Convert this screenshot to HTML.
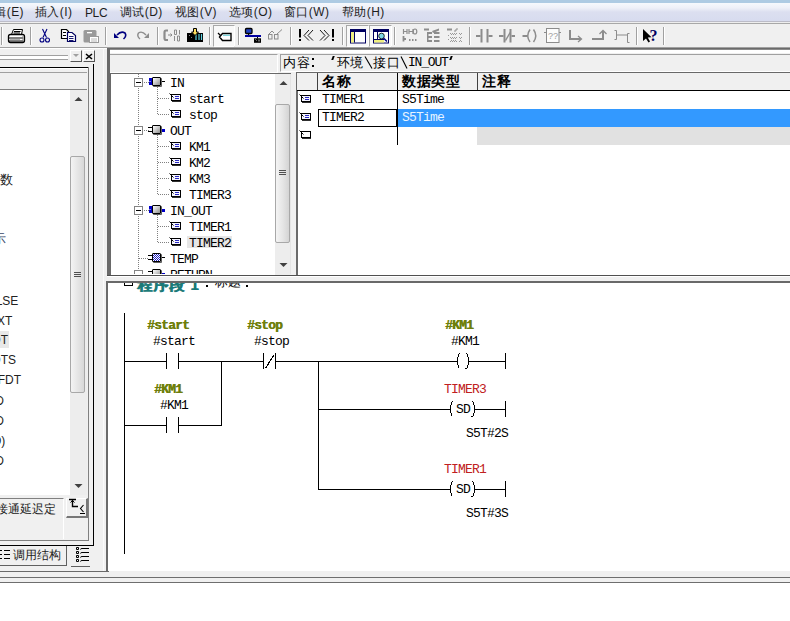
<!DOCTYPE html>
<html><head><meta charset="utf-8">
<style>
*{margin:0;padding:0;box-sizing:border-box}
html,body{width:790px;height:621px;overflow:hidden;background:#fff;position:relative;font-family:"Liberation Sans",sans-serif}
.a{position:absolute}
.mono{font-family:"Liberation Mono",monospace;font-size:13px;letter-spacing:-0.8px;white-space:pre;line-height:16px}
.menu{font-size:12px;color:#1e1e1e;top:5px;line-height:14px;white-space:pre;letter-spacing:0.4px}
.lad{font-family:"Liberation Mono",monospace;font-size:13px;letter-spacing:-0.8px;white-space:pre;line-height:14px}
.hl{position:absolute;height:1px}
.vl{position:absolute;width:1px}
</style></head><body>

<!-- menubar -->
<div class="a" style="left:0;top:0;width:790px;height:24px;background:linear-gradient(#aecbe3 0,#aecbe3 3px,#f6f9fd 3px,#eef0f8 8px,#dcdff0 12px,#d8dcef 20px)"></div>
<div class="hl" style="left:0;top:21px;width:790px;background:#bcbcc8"></div>
<div class="hl" style="left:0;top:22px;width:790px;background:#eeeeee"></div>
<div class="hl" style="left:0;top:23px;width:790px;background:#a8a8a8"></div>
<div class="a menu" style="left:-18px">编辑(E)</div>
<div class="a menu" style="left:35px">插入(I)</div>
<div class="a menu" style="left:85px;top:6px;letter-spacing:-0.4px">PLC</div>
<div class="a menu" style="left:120px">调试(D)</div>
<div class="a menu" style="left:175px">视图(V)</div>
<div class="a menu" style="left:229px">选项(O)</div>
<div class="a menu" style="left:284px">窗口(W)</div>
<div class="a menu" style="left:342px">帮助(H)</div>

<!-- toolbar -->
<div class="a" style="left:0;top:24px;width:790px;height:23px;background:#f0f0f0"></div>
<div class="hl" style="left:0;top:47px;width:790px;background:#a0a0a0"></div>

<svg class="a" style="left:0;top:0" width="790" height="48" shape-rendering="auto">
<!-- separators -->
<g fill="#a0a0a0">
<rect x="1" y="27" width="1" height="18"/><rect x="30" y="27" width="1" height="18"/>
<rect x="105" y="27" width="1" height="18"/><rect x="157" y="27" width="1" height="18"/>
<rect x="209" y="27" width="1" height="18"/><rect x="238" y="27" width="1" height="18"/>
<rect x="290" y="27" width="1" height="18"/><rect x="342" y="27" width="1" height="18"/>
<rect x="394" y="27" width="1" height="18"/><rect x="469" y="27" width="1" height="18"/>
<rect x="636" y="27" width="1" height="18"/><rect x="663" y="27" width="1" height="18"/>
</g>
<g fill="#ffffff">
<rect x="2" y="27" width="1" height="18"/><rect x="31" y="27" width="1" height="18"/>
<rect x="106" y="27" width="1" height="18"/><rect x="158" y="27" width="1" height="18"/>
<rect x="210" y="27" width="1" height="18"/><rect x="239" y="27" width="1" height="18"/>
<rect x="291" y="27" width="1" height="18"/><rect x="343" y="27" width="1" height="18"/>
<rect x="395" y="27" width="1" height="18"/><rect x="470" y="27" width="1" height="18"/>
<rect x="637" y="27" width="1" height="18"/><rect x="664" y="27" width="1" height="18"/>
</g>
<!-- pressed buttons -->
<g>
<rect x="213.5" y="25.5" width="21" height="21" fill="#f8f8f8" stroke="#a8a8a8"/>
<path d="M234.5 25.5V46.5H213.5" stroke="#ffffff" fill="none"/>
<rect x="346.5" y="25.5" width="22" height="21" fill="#f8f8f8" stroke="#a8a8a8"/>
<path d="M368.5 25.5V46.5H346.5" stroke="#ffffff" fill="none"/>
<rect x="369.5" y="25.5" width="22" height="21" fill="#f8f8f8" stroke="#a8a8a8"/>
<path d="M391.5 25.5V46.5H369.5" stroke="#ffffff" fill="none"/>
</g>
<!-- printer -->
<g fill="none" stroke="#000">
<path d="M11.5 34.5L13.5 29.5H22.5L21.5 34.5" fill="#fff"/>
<path d="M14 31.5H20.5M13.5 33H20" stroke="#000"/>
<path d="M10.5 34.5H22.5Q24.5 34.5 24.5 36.5V40.5Q24.5 42.5 22.5 42.5H10.5Q8.5 42.5 8.5 40.5V36.5Q8.5 34.5 10.5 34.5Z" fill="#fff" stroke-width="1.3"/>
<path d="M9 38H23.5M9 41H23.5" stroke-width="1"/>
<path d="M10 39.5H20" stroke="#b0b0b0"/>
<path d="M22.5 36.5h1M22.5 39.5h1" stroke="#808080"/>
</g>
<!-- scissors -->
<g stroke="#000080" fill="none" stroke-width="1.1">
<path d="M42.5 29L46.5 37.5M47 29L43 37.5"/>
<circle cx="42" cy="40" r="2"/><circle cx="47.5" cy="40" r="2"/>
</g>
<!-- copy -->
<g fill="#fff">
<path d="M61.5 29.5H66.5L68.5 31.5V38.5H61.5Z" stroke="#000" stroke-width="1.2"/>
<path d="M63 32.5H66M63 35.5H66" stroke="#000"/>
<path d="M67.5 32.5H72L75.5 35.5V41.5H67.5Z" stroke="#000060" stroke-width="1.2"/>
<path d="M69 36.5H73.5M69 38.5H73.5M69 40.5H73.5" stroke="#000060" stroke-width="0.9"/>
</g>
<!-- paste gray -->
<g>
<rect x="83.5" y="30" width="13" height="12.5" rx="1.5" fill="#9a9a9a"/>
<rect x="87" y="32" width="5" height="1.3" fill="#fff"/>
<rect x="89.5" y="36.5" width="9" height="6" fill="#fff" stroke="#9a9a9a"/>
<path d="M91 39H97M91 41H97" stroke="#b8b8b8"/>
</g>
<!-- undo -->
<g>
<path d="M117 35Q121 30.5 125 33Q127 36 123.5 39" stroke="#000080" stroke-width="1.6" fill="none"/>
<path d="M114 33L114 38L119 38Z" fill="#000080"/>
</g>
<!-- redo gray -->
<g>
<path d="M146 35Q142 30.5 138.5 33Q136.5 36 140 39" stroke="#8c8c8c" stroke-width="1.4" fill="none"/>
<path d="M149 33L149 38L144 38Z" fill="#8c8c8c"/>
</g>
<!-- gray compare icon -->
<g stroke="#8c8c8c" fill="none">
<path d="M168 30.5H166Q164.5 30.5 164.5 32.5V38Q164.5 40 166 40H168" stroke-width="2.2"/>
<path d="M168 35H172M170.5 33.5L172 35L170.5 36.5" stroke-width="1"/>
<path d="M174.5 30V34.5H176.5V30ZM179.5 30V34.5M174.5 36V41M177.5 36V41H179.5V36Z" stroke-width="1"/>
</g>
<!-- download icon -->
<g>
<rect x="187" y="33" width="16" height="9" fill="#000"/>
<path d="M196 34V40M199 34V40M201.5 34V40" stroke="#5ad0e0" stroke-width="1.2"/>
<path d="M189 35L190 36M191 37L192 38" stroke="#808080"/>
<path d="M193.5 28.5H196.5V32H198.5L195 35.5L191.5 32H193.5Z" fill="#ffe060" stroke="#000" stroke-width="1"/>
</g>
<!-- tag icon -->
<g>
<path d="M218 33L221 36" stroke="#000" stroke-width="1.2"/>
<path d="M222.5 33.5H231V40.5H222.5L219.5 37Z" fill="#fff" stroke="#000" stroke-width="1.4"/>
<path d="M223 35.3H230" stroke="#70d0d8" stroke-width="1.2"/>
</g>
<!-- network icon -->
<g>
<rect x="245.5" y="28.5" width="6.5" height="5" rx="1" fill="#2040c0" stroke="#000" stroke-width="1.3"/>
<rect x="248" y="34" width="1.2" height="1.5" fill="#000"/>
<rect x="245" y="35" width="16" height="2" fill="#0000a0"/>
<rect x="257" y="37" width="1" height="1.5" fill="#000"/>
<rect x="254" y="38.3" width="7" height="4.5" fill="#000"/>
<path d="M255.5 39.5L256.5 40.5M259 39.5V41.5" stroke="#fff" stroke-width="0.8"/>
</g>
<!-- glasses gray -->
<g stroke="#8c8c8c" fill="none" stroke-width="1">
<rect x="268.5" y="34.5" width="3.5" height="4.5"/><rect x="274.5" y="34.5" width="3.5" height="4.5"/>
<path d="M269 34L272 31L274 33M277 34L282 29.5"/>
</g>
<!-- !<< >>! -->
<g fill="#000">
<rect x="299" y="29" width="2" height="8.5"/><rect x="299" y="39" width="2" height="2"/>
<rect x="332" y="29" width="2" height="8.5"/><rect x="332" y="39" width="2" height="2"/>
</g>
<g stroke="#000" fill="none" stroke-width="0.9">
<path d="M309 30L304 35.5L309 40.5M313 30L308 35.5L313 40.5"/>
<path d="M320 30L325 35.5L320 40.5M324 30L329 35.5L324 40.5"/>
</g>
<!-- window icons -->
<g>
<rect x="350.5" y="29.5" width="15" height="13.5" fill="#fff" stroke="#000060"/>
<rect x="350.5" y="29.5" width="15" height="2.5" fill="#000060"/>
<rect x="351" y="32" width="3" height="10.5" fill="#f0f080"/>
<path d="M354.5 32V42.5" stroke="#000060"/>
<rect x="373.5" y="29.5" width="15" height="13.5" fill="#fff" stroke="#000060"/>
<rect x="373.5" y="29.5" width="15" height="2.5" fill="#000060"/>
<rect x="374" y="40" width="10" height="2.5" fill="#f0f080"/>
<path d="M377.5 32V39.5M374 39.5H384" stroke="#000060"/>
<circle cx="381.5" cy="36" r="2.8" fill="#80d8e8" stroke="#000" stroke-width="0.8"/>
<path d="M383.5 38L387 41.5" stroke="#000080" stroke-width="1.5"/>
</g>
<!-- gray icon A -->
<g stroke="#8c8c8c" fill="none" stroke-width="1.2">
<path d="M403.5 29V34M407 29V34M403.5 31.5H407M409 29V34M413 29V34M409 31.5H413"/>
<ellipse cx="415" cy="31.5" rx="1.8" ry="2.5"/>
<path d="M403.5 36V41.5M403.5 39H406" stroke-width="1.8"/>
<path d="M409 40H410.5M412 40H413.5M415 40H416.5" stroke-width="1.8"/>
</g>
<!-- gray icon B -->
<g fill="#8c8c8c">
<rect x="424" y="28.5" width="5" height="2"/><path d="M432 31L439 28.5V30.5L433 33Z"/>
<rect x="427" y="32" width="1.5" height="10"/>
<rect x="428" y="32" width="4" height="2"/><rect x="434" y="32" width="5.5" height="2"/>
<rect x="428" y="36" width="4" height="2"/><rect x="434" y="36" width="5.5" height="2"/>
<rect x="428" y="40" width="4" height="2"/><rect x="434" y="40" width="5.5" height="2"/>
</g>
<!-- gray icon C -->
<g fill="#909090">
<rect x="447" y="28.5" width="5" height="2"/>
<path d="M454 31H456V29H458" stroke="#909090" fill="none"/>
<g opacity="0.9">
<rect x="450" y="33" width="1" height="1"/><rect x="452" y="33" width="1" height="1"/><rect x="454" y="33" width="1" height="1"/><rect x="456" y="33" width="1" height="1"/><rect x="459" y="33" width="1" height="1"/><rect x="461" y="33" width="1" height="1"/>
<rect x="451" y="34" width="1" height="1"/><rect x="453" y="34" width="1" height="1"/><rect x="455" y="34" width="1" height="1"/><rect x="460" y="34" width="1" height="1"/>
<rect x="450" y="37" width="1" height="1"/><rect x="452" y="37" width="1" height="1"/><rect x="454" y="37" width="1" height="1"/><rect x="456" y="37" width="1" height="1"/><rect x="459" y="37" width="1" height="1"/><rect x="461" y="37" width="1" height="1"/>
<rect x="451" y="38" width="1" height="1"/><rect x="453" y="38" width="1" height="1"/><rect x="455" y="38" width="1" height="1"/><rect x="460" y="38" width="1" height="1"/>
<rect x="450" y="41" width="1" height="1"/><rect x="452" y="41" width="1" height="1"/><rect x="454" y="41" width="1" height="1"/><rect x="456" y="41" width="1" height="1"/><rect x="459" y="41" width="1" height="1"/><rect x="461" y="41" width="1" height="1"/>
<rect x="451" y="40" width="1" height="1"/><rect x="453" y="40" width="1" height="1"/><rect x="455" y="40" width="1" height="1"/><rect x="460" y="40" width="1" height="1"/>
<rect x="448" y="35" width="1" height="1"/><rect x="448" y="39" width="1" height="1"/>
</g>
</g>
<!-- contacts -->
<g fill="#8c8c8c">
<rect x="476" y="35" width="4.5" height="2"/><rect x="480.5" y="29" width="2" height="13.5"/><rect x="486.5" y="29" width="2" height="13.5"/><rect x="488.5" y="35" width="4" height="2"/>
<rect x="499" y="35" width="4.5" height="2"/><rect x="503.5" y="29" width="2" height="13.5"/><rect x="509.5" y="29" width="2" height="13.5"/><rect x="511.5" y="35" width="3.5" height="2"/>
<path d="M505 40L510 31.5L511 32.5L506 41Z"/>
<rect x="522.5" y="35" width="4.5" height="2"/>
</g>
<g stroke="#8c8c8c" fill="none" stroke-width="1.5">
<path d="M530 29.5Q525.5 35.8 530 42M533.5 29.5Q538 35.8 533.5 42"/>
</g>
<!-- ?? box -->
<g>
<rect x="546.5" y="28.5" width="12.5" height="14" fill="#fcfcfc" stroke="#8c8c8c"/>
<path d="M544 32.5H546M559 32.5H561" stroke="#8c8c8c"/>
<text x="548" y="39" font-family="Liberation Mono" font-size="9" fill="#a0a0a0" letter-spacing="-0.5">??</text>
</g>
<!-- L-> -->
<g stroke="#8c8c8c" fill="none" stroke-width="2">
<path d="M570 30V39H581"/><path d="M578 36L581.5 39L578 42" stroke-width="1.3"/>
</g>
<!-- _| up -->
<g stroke="#8c8c8c" fill="none" stroke-width="2">
<path d="M592 39H603V31"/><path d="M599.5 34L603 30.5L606.5 34" stroke-width="1.3"/>
</g>
<!-- ]-[ -->
<g stroke="#8c8c8c" fill="none" stroke-width="1">
<path d="M614.5 30.5H616.5V39.5H614.5M617 35H627M629.5 33.5H627.5V42.5H629.5"/>
</g>
<!-- help pointer -->
<g>
<path d="M643 29L643 41L646 38.5L648.5 42.5L650 41.5L647.8 37.5L651.5 37.3Z" fill="#000"/>
<text x="649.5" y="41" font-family="Liberation Serif" font-weight="bold" font-size="16" fill="#000060">?</text>
</g>
</svg>

<!-- left dock -->
<div class="a" style="left:0;top:48px;width:107px;height:524px;background:#f0f0f0"></div>

<!-- MDI frame -->
<div class="a" style="left:107px;top:48px;width:683px;height:524px;background:#f0f0f0"></div>



<!-- MDI child -->
<div class="hl" style="left:109px;top:48px;width:681px;background:#6a6a6a"></div>
<div class="hl" style="left:109px;top:49px;width:681px;background:#8a8a8a"></div>
<div class="a" style="left:109px;top:50px;width:681px;height:3px;background:#fff"></div>
<!-- tree header box -->
<div class="a" style="left:109px;top:54px;width:169px;height:19px;border-top:1px solid #a0a0a0;border-left:1px solid #a0a0a0;border-right:1px solid #fff;border-bottom:1px solid #fff;background:#f0f0f0"></div>
<!-- content header box -->
<div class="a" style="left:280px;top:54px;width:520px;height:18px;border-top:1px solid #a0a0a0;border-left:1px solid #a0a0a0;border-bottom:1px solid #fff;background:#f0f0f0"></div>
<div class="a" style="left:283px;top:56px;font-size:13px;line-height:13px;color:#000;white-space:pre;letter-spacing:1px">内容</div>
<div class="a" style="left:312px;top:58px;width:2px;height:2px;background:#000"></div><div class="a" style="left:312px;top:65px;width:2px;height:2px;background:#000"></div>
<div class="a" style="left:332px;top:56px;width:2px;height:4px;background:#000;transform:skewX(-20deg)"></div>
<div class="a" style="left:337px;top:56px;font-size:13px;line-height:13px;color:#000;white-space:pre;letter-spacing:0px">环境</div>
<div class="a" style="left:373px;top:56px;font-size:13px;line-height:13px;color:#000;white-space:pre;letter-spacing:1px">接口</div>
<svg class="a" style="left:364px;top:56px" width="10" height="13"><path d="M1 0.5L8 12.5" stroke="#000" stroke-width="1.1"/></svg>
<svg class="a" style="left:400px;top:56px" width="10" height="13"><path d="M1 0.5L7 12.5" stroke="#000" stroke-width="1.1"/></svg>
<div class="a mono" style="left:408px;top:55px;letter-spacing:-1.2px">IN_OUT</div>
<div class="a" style="left:450px;top:56px;width:2px;height:4px;background:#000;transform:skewX(-20deg)"></div>

<!-- tree pane -->
<div class="a" style="left:110px;top:73px;width:181px;height:202px;border-top:1px solid #696969;border-left:1px solid #696969;background:#fff"></div>

<!-- tree scrollbar -->
<div class="a" style="left:275px;top:74px;width:16px;height:201px;background:#ededed"></div>
<svg class="a" style="left:279px;top:80px" width="9" height="6"><path d="M0.5 5L4.5 1L8.5 5Z" fill="#404040"/></svg>
<svg class="a" style="left:279px;top:262px" width="9" height="6"><path d="M0.5 1L4.5 5L8.5 1Z" fill="#404040"/></svg>
<div class="a" style="left:275px;top:104px;width:15px;height:139px;border:1px solid #a8a8a8;border-radius:2px;background:linear-gradient(90deg,#f4f4f4,#e6e6e6 50%,#d4d4d4)"></div>
<svg class="a" style="left:279px;top:169px" width="8" height="7"><path d="M0 1.5H7M0 3.5H7M0 5.5H7" stroke="#505050"/></svg>
<div class="vl" style="left:290px;top:74px;height:200px;background:#e4e4e4"></div>

<!-- table pane -->
<div class="a" style="left:296px;top:72px;width:494px;height:203px;border-top:1px solid #696969;border-left:2px solid #6a6a6a;background:#fff"></div>
<div class="a" style="left:297px;top:73px;width:493px;height:17px;background:#f0f0f0"></div>
<div class="hl" style="left:297px;top:90px;width:493px;background:#000"></div>
<div class="vl" style="left:317px;top:73px;height:17px;background:#404040"></div>
<div class="vl" style="left:397px;top:73px;height:72px;background:#000"></div>
<div class="vl" style="left:477px;top:73px;height:17px;background:#404040"></div>
<div class="a mono" style="left:322px;top:74px;font-weight:bold;color:#000;font-size:14px;letter-spacing:0.5px">名称</div>
<div class="a mono" style="left:402px;top:74px;font-weight:bold;color:#000;font-size:14px;letter-spacing:0.5px">数据类型</div>
<div class="a mono" style="left:482px;top:74px;font-weight:bold;color:#000;font-size:14px;letter-spacing:0.5px">注释</div>
<div class="a mono" style="left:322px;top:92px;color:#000">TIMER1</div>
<div class="a mono" style="left:402px;top:92px;color:#000">S5Time</div>
<div class="a" style="left:318px;top:109px;width:79px;height:18px;border:1px solid #000"></div>
<div class="a mono" style="left:322px;top:110px;color:#000">TIMER2</div>
<div class="a" style="left:398px;top:109px;width:392px;height:18px;background:#3399ff"></div>
<div class="a mono" style="left:402px;top:110px;color:#e8f4ff">S5Time</div>
<div class="a" style="left:477px;top:127px;width:313px;height:18px;background:#e1e1e1"></div>
<svg class="a" style="left:298px;top:94px" width="15" height="10"><rect x="3.5" y="1.5" width="9" height="6" fill="#f4f4ff" stroke="#000"/><path d="M4 8.5H13" stroke="#303030"/><path d="M1.5 0.5L5.5 4.5" stroke="#000"/><path d="M7 3.5H11M7 5.5H11" stroke="#2828c0"/></svg>
<svg class="a" style="left:298px;top:112px" width="15" height="10"><rect x="3.5" y="1.5" width="9" height="6" fill="#f4f4ff" stroke="#000"/><path d="M4 8.5H13" stroke="#303030"/><path d="M1.5 0.5L5.5 4.5" stroke="#000"/><path d="M7 3.5H11M7 5.5H11" stroke="#2828c0"/></svg>
<svg class="a" style="left:298px;top:130px" width="15" height="10"><rect x="3.5" y="1.5" width="9" height="6" fill="#fff" stroke="#000"/><path d="M4 8.5H13" stroke="#303030"/><path d="M1.5 0.5L5.5 4.5" stroke="#000"/></svg>
<div class="a" style="left:111px;top:74px;width:164px;height:200px;overflow:hidden"><div class="a" style="left:-111px;top:-74px;width:790px;height:621px"><div class="a" style="left:138px;top:74px;width:1px;height:199px;background:repeating-linear-gradient(#808080 0 1px,transparent 1px 2px)"></div>
<div class="a" style="left:157px;top:87px;width:1px;height:28px;background:repeating-linear-gradient(#808080 0 1px,transparent 1px 2px)"></div>
<div class="a" style="left:157px;top:135px;width:1px;height:60px;background:repeating-linear-gradient(#808080 0 1px,transparent 1px 2px)"></div>
<div class="a" style="left:157px;top:215px;width:1px;height:28px;background:repeating-linear-gradient(#808080 0 1px,transparent 1px 2px)"></div>
<div class="a" style="left:187px;top:236px;width:45px;height:12px;background:#e6e6e6"></div>
<div class="a" style="left:134px;top:78px;width:9px;height:9px;border:1px solid #848484;background:#fff"></div>
<div class="a" style="left:136px;top:82px;width:5px;height:1px;background:#000"></div>
<div class="a" style="left:144px;top:82px;width:5px;height:1px;background:repeating-linear-gradient(90deg,#808080 0 1px,transparent 1px 2px)"></div>
<div class="a" style="left:149px;top:78px;width:4px;height:7px;background:#0000c8"></div>
<div class="a" style="left:149px;top:81px;width:2px;height:1px;background:#8080e0"></div>
<div class="a" style="left:160px;top:81px;width:5px;height:1px;background:#000"></div>
<div class="a" style="left:152px;top:77px;width:9px;height:9px;border:1px solid #000;border-radius:1px;background:linear-gradient(135deg,#ffffff,#c8c8c8 50%,#8c8c8c);box-shadow:1px 1px 0 #606060"></div>
<div class="a mono" style="left:170px;top:76px;color:#000">IN</div>
<div class="a" style="left:158px;top:98px;width:11px;height:1px;background:repeating-linear-gradient(90deg,#808080 0 1px,transparent 1px 2px)"></div>
<svg class="a" style="left:168px;top:93px" width="15" height="10"><rect x="3.5" y="1.5" width="9" height="6" fill="#f4f4ff" stroke="#000"/><path d="M4 8.5H13" stroke="#303030"/><path d="M1.5 0.5L5.5 4.5" stroke="#000"/><path d="M7 3.5H11M7 5.5H11" stroke="#2828c0"/></svg>
<div class="a mono" style="left:189px;top:92px;color:#000">start</div>
<div class="a" style="left:158px;top:114px;width:11px;height:1px;background:repeating-linear-gradient(90deg,#808080 0 1px,transparent 1px 2px)"></div>
<svg class="a" style="left:168px;top:109px" width="15" height="10"><rect x="3.5" y="1.5" width="9" height="6" fill="#f4f4ff" stroke="#000"/><path d="M4 8.5H13" stroke="#303030"/><path d="M1.5 0.5L5.5 4.5" stroke="#000"/><path d="M7 3.5H11M7 5.5H11" stroke="#2828c0"/></svg>
<div class="a mono" style="left:189px;top:108px;color:#000">stop</div>
<div class="a" style="left:134px;top:126px;width:9px;height:9px;border:1px solid #848484;background:#fff"></div>
<div class="a" style="left:136px;top:130px;width:5px;height:1px;background:#000"></div>
<div class="a" style="left:144px;top:130px;width:5px;height:1px;background:repeating-linear-gradient(90deg,#808080 0 1px,transparent 1px 2px)"></div>
<div class="a" style="left:148px;top:127px;width:5px;height:1px;background:#000"></div>
<div class="a" style="left:148px;top:131px;width:5px;height:1px;background:#000"></div>
<div class="a" style="left:160px;top:129px;width:5px;height:3px;background:#0000c8"></div>
<div class="a" style="left:152px;top:125px;width:9px;height:9px;border:1px solid #000;border-radius:1px;background:linear-gradient(135deg,#ffffff,#c8c8c8 50%,#8c8c8c);box-shadow:1px 1px 0 #606060"></div>
<div class="a mono" style="left:170px;top:124px;color:#000">OUT</div>
<div class="a" style="left:158px;top:146px;width:11px;height:1px;background:repeating-linear-gradient(90deg,#808080 0 1px,transparent 1px 2px)"></div>
<svg class="a" style="left:168px;top:141px" width="15" height="10"><rect x="3.5" y="1.5" width="9" height="6" fill="#f4f4ff" stroke="#000"/><path d="M4 8.5H13" stroke="#303030"/><path d="M1.5 0.5L5.5 4.5" stroke="#000"/><path d="M7 3.5H11M7 5.5H11" stroke="#2828c0"/></svg>
<div class="a mono" style="left:189px;top:140px;color:#000">KM1</div>
<div class="a" style="left:158px;top:162px;width:11px;height:1px;background:repeating-linear-gradient(90deg,#808080 0 1px,transparent 1px 2px)"></div>
<svg class="a" style="left:168px;top:157px" width="15" height="10"><rect x="3.5" y="1.5" width="9" height="6" fill="#f4f4ff" stroke="#000"/><path d="M4 8.5H13" stroke="#303030"/><path d="M1.5 0.5L5.5 4.5" stroke="#000"/><path d="M7 3.5H11M7 5.5H11" stroke="#2828c0"/></svg>
<div class="a mono" style="left:189px;top:156px;color:#000">KM2</div>
<div class="a" style="left:158px;top:178px;width:11px;height:1px;background:repeating-linear-gradient(90deg,#808080 0 1px,transparent 1px 2px)"></div>
<svg class="a" style="left:168px;top:173px" width="15" height="10"><rect x="3.5" y="1.5" width="9" height="6" fill="#f4f4ff" stroke="#000"/><path d="M4 8.5H13" stroke="#303030"/><path d="M1.5 0.5L5.5 4.5" stroke="#000"/><path d="M7 3.5H11M7 5.5H11" stroke="#2828c0"/></svg>
<div class="a mono" style="left:189px;top:172px;color:#000">KM3</div>
<div class="a" style="left:158px;top:194px;width:11px;height:1px;background:repeating-linear-gradient(90deg,#808080 0 1px,transparent 1px 2px)"></div>
<svg class="a" style="left:168px;top:189px" width="15" height="10"><rect x="3.5" y="1.5" width="9" height="6" fill="#f4f4ff" stroke="#000"/><path d="M4 8.5H13" stroke="#303030"/><path d="M1.5 0.5L5.5 4.5" stroke="#000"/><path d="M7 3.5H11M7 5.5H11" stroke="#2828c0"/></svg>
<div class="a mono" style="left:189px;top:188px;color:#000">TIMER3</div>
<div class="a" style="left:134px;top:206px;width:9px;height:9px;border:1px solid #848484;background:#fff"></div>
<div class="a" style="left:136px;top:210px;width:5px;height:1px;background:#000"></div>
<div class="a" style="left:144px;top:210px;width:5px;height:1px;background:repeating-linear-gradient(90deg,#808080 0 1px,transparent 1px 2px)"></div>
<div class="a" style="left:149px;top:206px;width:4px;height:7px;background:#0000c8"></div>
<div class="a" style="left:149px;top:209px;width:2px;height:1px;background:#8080e0"></div>
<div class="a" style="left:160px;top:209px;width:5px;height:3px;background:#0000c8"></div>
<div class="a" style="left:152px;top:205px;width:9px;height:9px;border:1px solid #000;border-radius:1px;background:linear-gradient(135deg,#ffffff,#c8c8c8 50%,#8c8c8c);box-shadow:1px 1px 0 #606060"></div>
<div class="a mono" style="left:170px;top:204px;color:#000">IN_OUT</div>
<div class="a" style="left:158px;top:226px;width:11px;height:1px;background:repeating-linear-gradient(90deg,#808080 0 1px,transparent 1px 2px)"></div>
<svg class="a" style="left:168px;top:221px" width="15" height="10"><rect x="3.5" y="1.5" width="9" height="6" fill="#f4f4ff" stroke="#000"/><path d="M4 8.5H13" stroke="#303030"/><path d="M1.5 0.5L5.5 4.5" stroke="#000"/><path d="M7 3.5H11M7 5.5H11" stroke="#2828c0"/></svg>
<div class="a mono" style="left:189px;top:220px;color:#000">TIMER1</div>
<div class="a" style="left:158px;top:242px;width:11px;height:1px;background:repeating-linear-gradient(90deg,#808080 0 1px,transparent 1px 2px)"></div>
<svg class="a" style="left:168px;top:237px" width="15" height="10"><rect x="3.5" y="1.5" width="9" height="6" fill="#f4f4ff" stroke="#000"/><path d="M4 8.5H13" stroke="#303030"/><path d="M1.5 0.5L5.5 4.5" stroke="#000"/><path d="M7 3.5H11M7 5.5H11" stroke="#2828c0"/></svg>
<div class="a mono" style="left:189px;top:236px;color:#000">TIMER2</div>
<div class="a" style="left:139px;top:258px;width:10px;height:1px;background:repeating-linear-gradient(90deg,#808080 0 1px,transparent 1px 2px)"></div>
<div class="a" style="left:148px;top:255px;width:5px;height:1px;background:#000"></div>
<div class="a" style="left:148px;top:259px;width:5px;height:1px;background:#000"></div>
<div class="a" style="left:160px;top:257px;width:5px;height:1px;background:#000"></div>
<div class="a" style="left:152px;top:253px;width:9px;height:9px;border:1px solid #000;border-radius:1px;background:repeating-conic-gradient(#2020c0 0 25%,#ffffff 0 50%) 0 0/2px 2px;box-shadow:1px 1px 0 #606060"></div>
<div class="a mono" style="left:170px;top:252px;color:#000">TEMP</div>
<div class="a" style="left:134px;top:270px;width:9px;height:9px;border:1px solid #848484;background:#fff"></div>
<div class="a" style="left:136px;top:274px;width:5px;height:1px;background:#000"></div>
<div class="a" style="left:144px;top:274px;width:5px;height:1px;background:repeating-linear-gradient(90deg,#808080 0 1px,transparent 1px 2px)"></div>
<div class="a" style="left:148px;top:271px;width:5px;height:1px;background:#000"></div>
<div class="a" style="left:148px;top:275px;width:5px;height:1px;background:#000"></div>
<div class="a" style="left:160px;top:273px;width:5px;height:3px;background:#0000c8"></div>
<div class="a" style="left:152px;top:269px;width:9px;height:9px;border:1px solid #000;border-radius:1px;background:linear-gradient(135deg,#ffffff,#c8c8c8 50%,#8c8c8c);box-shadow:1px 1px 0 #606060"></div>
<div class="a mono" style="left:170px;top:268px;color:#000">RETURN</div></div></div>

<!-- splitter below -->
<div class="a" style="left:104px;top:275px;width:686px;height:6px;background:#f0f0f0"></div>
<div class="hl" style="left:107px;top:275px;width:683px;background:#505050"></div>
<div class="hl" style="left:107px;top:276px;width:683px;background:#fff"></div>
<!-- ladder pane -->
<div class="a" style="left:106px;top:281px;width:684px;height:290px;border-top:2px solid #696969;background:#fff"></div>
<div class="a" style="left:109px;top:283px;width:681px;height:288px;overflow:hidden"><div class="a" style="left:-109px;top:-283px;width:790px;height:621px"><div class="a" style="left:124px;top:313px;width:1px;height:241px;background:#000"></div>
<div class="a" style="left:124px;top:361px;width:43px;height:1px;background:#000"></div>
<div class="a" style="left:166px;top:353px;width:1px;height:16px;background:#000"></div>
<div class="a" style="left:178px;top:353px;width:1px;height:16px;background:#000"></div>
<div class="a" style="left:178px;top:361px;width:86px;height:1px;background:#000"></div>
<div class="a" style="left:263px;top:353px;width:1px;height:16px;background:#000"></div>
<div class="a" style="left:275px;top:353px;width:1px;height:16px;background:#000"></div>
<svg class="a" style="left:263px;top:353px" width="12" height="17" shape-rendering="crispEdges"><path d="M2.5 15.5L10.5 2.5" stroke="#000" stroke-width="1.2"/></svg>
<div class="a" style="left:275px;top:361px;width:183px;height:1px;background:#000"></div>
<div class="a" style="left:459px;top:353px;width:1px;height:1px;background:#000"></div>
<div class="a" style="left:458px;top:354px;width:1px;height:3px;background:#000"></div>
<div class="a" style="left:457px;top:357px;width:1px;height:8px;background:#000"></div>
<div class="a" style="left:458px;top:365px;width:1px;height:3px;background:#000"></div>
<div class="a" style="left:466px;top:353px;width:1px;height:1px;background:#000"></div>
<div class="a" style="left:467px;top:354px;width:1px;height:3px;background:#000"></div>
<div class="a" style="left:468px;top:357px;width:1px;height:8px;background:#000"></div>
<div class="a" style="left:467px;top:365px;width:1px;height:3px;background:#000"></div>
<div class="a" style="left:465px;top:368px;width:2px;height:1px;background:#000"></div>
<div class="a" style="left:468px;top:361px;width:38px;height:1px;background:#000"></div>
<div class="a" style="left:505px;top:353px;width:1px;height:16px;background:#000"></div>
<div class="a" style="left:221px;top:361px;width:1px;height:65px;background:#000"></div>
<div class="a" style="left:124px;top:425px;width:43px;height:1px;background:#000"></div>
<div class="a" style="left:166px;top:417px;width:1px;height:16px;background:#000"></div>
<div class="a" style="left:178px;top:417px;width:1px;height:16px;background:#000"></div>
<div class="a" style="left:178px;top:425px;width:44px;height:1px;background:#000"></div>
<div class="a" style="left:318px;top:361px;width:1px;height:129px;background:#000"></div>
<div class="a" style="left:318px;top:409px;width:133px;height:1px;background:#000"></div>
<div class="a" style="left:452px;top:401px;width:1px;height:1px;background:#000"></div>
<div class="a" style="left:451px;top:402px;width:1px;height:3px;background:#000"></div>
<div class="a" style="left:450px;top:405px;width:1px;height:8px;background:#000"></div>
<div class="a" style="left:451px;top:413px;width:1px;height:3px;background:#000"></div>
<div class="a" style="left:472px;top:401px;width:1px;height:1px;background:#000"></div>
<div class="a" style="left:473px;top:402px;width:1px;height:3px;background:#000"></div>
<div class="a" style="left:474px;top:405px;width:1px;height:8px;background:#000"></div>
<div class="a" style="left:473px;top:413px;width:1px;height:3px;background:#000"></div>
<div class="a" style="left:471px;top:416px;width:2px;height:1px;background:#000"></div>
<div class="a" style="left:474px;top:409px;width:32px;height:1px;background:#000"></div>
<div class="a" style="left:505px;top:401px;width:1px;height:16px;background:#000"></div>
<div class="a lad" style="left:456px;top:403px;color:#000;">SD</div>
<div class="a" style="left:318px;top:489px;width:133px;height:1px;background:#000"></div>
<div class="a" style="left:452px;top:481px;width:1px;height:1px;background:#000"></div>
<div class="a" style="left:451px;top:482px;width:1px;height:3px;background:#000"></div>
<div class="a" style="left:450px;top:485px;width:1px;height:8px;background:#000"></div>
<div class="a" style="left:451px;top:493px;width:1px;height:3px;background:#000"></div>
<div class="a" style="left:472px;top:481px;width:1px;height:1px;background:#000"></div>
<div class="a" style="left:473px;top:482px;width:1px;height:3px;background:#000"></div>
<div class="a" style="left:474px;top:485px;width:1px;height:8px;background:#000"></div>
<div class="a" style="left:473px;top:493px;width:1px;height:3px;background:#000"></div>
<div class="a" style="left:471px;top:496px;width:2px;height:1px;background:#000"></div>
<div class="a" style="left:474px;top:489px;width:32px;height:1px;background:#000"></div>
<div class="a" style="left:505px;top:481px;width:1px;height:16px;background:#000"></div>
<div class="a lad" style="left:456px;top:483px;color:#000;">SD</div>
<div class="a lad" style="left:147px;top:319px;color:#6f7f0c;font-weight:bold;text-shadow:0.4px 0 #6f7f0c;">#start</div>
<div class="a lad" style="left:153px;top:335px;color:#000;">#start</div>
<div class="a lad" style="left:247px;top:319px;color:#6f7f0c;font-weight:bold;text-shadow:0.4px 0 #6f7f0c;">#stop</div>
<div class="a lad" style="left:254px;top:335px;color:#000;">#stop</div>
<div class="a lad" style="left:154px;top:383px;color:#6f7f0c;font-weight:bold;text-shadow:0.4px 0 #6f7f0c;">#KM1</div>
<div class="a lad" style="left:160px;top:399px;color:#000;">#KM1</div>
<div class="a lad" style="left:445px;top:319px;color:#6f7f0c;font-weight:bold;text-shadow:0.4px 0 #6f7f0c;">#KM1</div>
<div class="a lad" style="left:451px;top:335px;color:#000;">#KM1</div>
<div class="a lad" style="left:444px;top:383px;color:#c02020;">TIMER3</div>
<div class="a lad" style="left:466px;top:427px;color:#000;">S5T#2S</div>
<div class="a lad" style="left:444px;top:463px;color:#c02020;">TIMER1</div>
<div class="a lad" style="left:466px;top:507px;color:#000;">S5T#3S</div>
<div class="a" style="left:124px;top:280px;width:9px;height:6px;border:1px solid #000;background:#fff"></div>
<div class="a" style="left:137px;top:277px;font-size:15px;font-weight:bold;color:#1a7a78;line-height:15px;white-space:pre;letter-spacing:1px;text-shadow:0.6px 0 #1a7a78">程序段 1</div>
<div class="a" style="left:206px;top:285px;width:2px;height:2px;background:#000"></div>
<div class="a" style="left:246px;top:285px;width:2px;height:2px;background:#000"></div>
<div class="a" style="left:215px;top:275px;font-size:13px;color:#000;line-height:13px;white-space:pre">标题</div></div></div>

<!-- left dock details -->
<div class="hl" style="left:0;top:48px;width:107px;background:#ffffff"></div>
<div class="hl" style="left:0;top:55px;width:68px;background:#a0a0a0"></div>
<div class="a" style="left:0;top:56px;width:68px;height:3px;background:#fff"></div>
<div class="hl" style="left:0;top:59px;width:68px;background:#a0a0a0"></div>
<!-- dropdown btn -->
<div class="a" style="left:70px;top:50px;width:12px;height:12px;background:#f0f0f0;border-right:1px solid #555;border-bottom:1px solid #555;border-top:1px solid #fff;border-left:1px solid #fff"></div>
<svg class="a" style="left:73px;top:54px" width="6" height="4"><path d="M0 0H6L3 3Z" fill="#a0a0a0"/></svg>
<!-- close btn -->
<div class="a" style="left:83px;top:50px;width:12px;height:12px;background:#f0f0f0;border-right:1px solid #555;border-bottom:1px solid #555;border-top:1px solid #fff;border-left:1px solid #fff"></div>
<svg class="a" style="left:85px;top:53px" width="8" height="7"><path d="M1 1L7 6M7 1L1 6" stroke="#000" stroke-width="1.6"/></svg>
<!-- tab frame -->
<div class="hl" style="left:0;top:67px;width:89px;background:#000"></div>
<div class="hl" style="left:0;top:68px;width:88px;background:#fff"></div>
<div class="vl" style="left:88px;top:67px;height:474px;background:#808080"></div>
<div class="vl" style="left:93px;top:64px;height:482px;background:#000"></div>
<div class="hl" style="left:0;top:540px;width:89px;background:#808080"></div>
<div class="hl" style="left:0;top:545px;width:94px;background:#000"></div>
<!-- header strip -->
<div class="hl" style="left:0;top:72px;width:87px;background:#a0a0a0"></div>
<div class="hl" style="left:0;top:89px;width:87px;background:#808080"></div>
<!-- list -->
<div class="a" style="left:0;top:90px;width:70px;height:405px;background:#fff"></div>
<!-- scrollbar -->
<div class="a" style="left:70px;top:90px;width:17px;height:405px;background:#ededed"></div>
<svg class="a" style="left:74px;top:96px" width="9" height="6"><path d="M0.5 5L4.5 1L8.5 5Z" fill="#404040"/></svg>
<svg class="a" style="left:74px;top:483px" width="9" height="6"><path d="M0.5 1L4.5 5L8.5 1Z" fill="#404040"/></svg>
<div class="a" style="left:70px;top:156px;width:15px;height:237px;border:1px solid #a8a8a8;border-radius:2px;background:linear-gradient(90deg,#f4f4f4,#e6e6e6 50%,#d8d8d8)"></div>
<svg class="a" style="left:74px;top:271px" width="8" height="7"><path d="M0 1.5H7M0 3.5H7M0 5.5H7" stroke="#505050"/></svg>
<!-- list text -->
<div class="a" style="left:-13px;top:173px;font-size:13px;color:#222;line-height:14px">参数</div>
<div class="a" style="left:-20px;top:232px;font-size:13px;color:#3a4a6a;line-height:14px">显示</div>
<div class="a" style="left:-21px;top:294px;font-size:12px;color:#222;line-height:14px">PULSE</div>
<div class="a" style="left:-19px;top:314px;font-size:12px;color:#222;line-height:14px">PEXT</div>
<div class="a" style="left:0;top:331px;width:9px;height:17px;background:#e8e8e8"></div>
<div class="a" style="left:-8px;top:333px;font-size:12px;color:#222;line-height:14px">DT</div>
<div class="a" style="left:-8px;top:353px;font-size:12px;color:#222;line-height:14px">DTS</div>
<div class="a" style="left:-19px;top:373px;font-size:12px;color:#222;line-height:14px">OFFDT</div>
<div class="a" style="left:-14px;top:394px;font-size:12px;color:#222;line-height:14px">OD</div>
<div class="a" style="left:-14px;top:414px;font-size:12px;color:#222;line-height:14px">OD</div>
<div class="a" style="left:-12px;top:434px;font-size:12px;color:#222;line-height:14px">(O)</div>
<div class="a" style="left:-14px;top:454px;font-size:12px;color:#222;line-height:14px">OD</div>
<!-- bottom info -->
<div class="a" style="left:0;top:498px;width:64px;height:41px;border-top:1px solid #808080;border-right:1px solid #fff;background:#f0f0f0"></div>
<div class="a" style="left:-4px;top:502px;font-size:12px;color:#222;line-height:14px;white-space:pre;letter-spacing:0px">接通延迟定</div>
<div class="a" style="left:66px;top:498px;width:22px;height:20px;border-top:1px solid #fff;border-left:1px solid #fff;border-right:2px solid #777;border-bottom:2px solid #777;background:#f0f0f0"></div>
<svg class="a" style="left:68px;top:498px" width="18" height="17"><path d="M1 1.5H8M4.5 2V8.5H10" stroke="#000" stroke-width="1.4" fill="none"/><path d="M2.5 4.5L4.5 2.5L6.5 4.5" stroke="#000" fill="none"/><path d="M15.5 7L12.5 10.5L15.5 14M12 15.5H17" stroke="#000" stroke-width="1.1" fill="none"/></svg>
<!-- tabs -->
<div class="a" style="left:0;top:546px;width:67px;height:20px;border-right:1px solid #606060;border-bottom:1px solid #606060;background:#f0f0f0"></div>
<div class="a" style="left:13px;top:548px;font-size:12px;color:#222;line-height:14px;white-space:pre">调用结构</div>
<svg class="a" style="left:0;top:549px" width="12" height="14"><path d="M0 1.5H2M4 1.5H10M0 5.5H2M4 5.5H10M0 9.5H2M4 9.5H10" stroke="#000" stroke-width="1.2"/></svg>
<div class="a" style="left:71px;top:566px;width:19px;height:1px;background:#606060"></div>
<svg class="a" style="left:75px;top:546px" width="16" height="17"><path d="M1.5 1.5h2v2h-2zM1.5 5.5h2v2h-2zM1.5 9.5h2v2h-2zM1.5 13.5h2v2h-2z" stroke="#000" fill="none"/><path d="M5.5 3.5Q5.5 2.5 7 2.5H14M5.5 7.5Q5.5 6.5 7 6.5H14M5.5 11.5Q5.5 10.5 7 10.5H14M5.5 15.5Q5.5 14.5 7 14.5H14" stroke="#000" fill="none"/></svg>
<!-- left dock right splitter -->
<div class="vl" style="left:103px;top:48px;height:523px;background:#fafafa"></div>
<div class="a" style="left:107px;top:48px;width:3px;height:227px;background:#6a6a6a"></div>
<div class="a" style="left:106px;top:281px;width:2px;height:291px;background:#6a6a6a"></div>
<div class="a" style="left:104px;top:275px;width:3px;height:6px;background:#f0f0f0"></div>
<div class="hl" style="left:0;top:571px;width:109px;background:#6a6a6a"></div>

<!-- bottom lines -->
<div class="a" style="left:0;top:572px;width:790px;height:11px;background:#f0f0f0"></div>
<div class="hl" style="left:0;top:577px;width:790px;background:#6e6e6e"></div>
<div class="hl" style="left:0;top:582px;width:790px;background:#6e6e6e"></div>

</body></html>
